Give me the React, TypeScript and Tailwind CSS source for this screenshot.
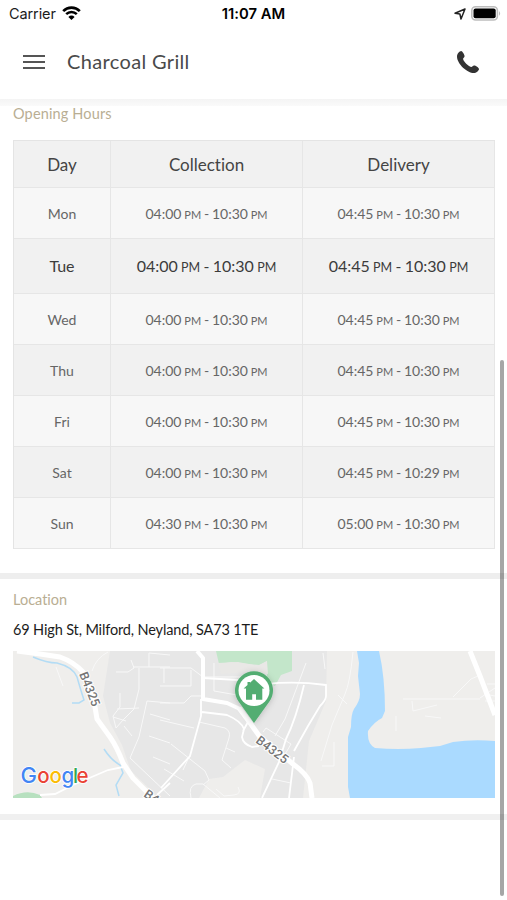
import React from 'react';
import clsx from 'clsx';

interface OpeningTime {
  day: string;
  collection: [string, string];
  delivery: [string, string];
}

const OPENING_HOURS: OpeningTime[] = [
  { day: 'Mon', collection: ['04:00', '10:30'], delivery: ['04:45', '10:30'] },
  { day: 'Tue', collection: ['04:00', '10:30'], delivery: ['04:45', '10:30'] },
  { day: 'Wed', collection: ['04:00', '10:30'], delivery: ['04:45', '10:30'] },
  { day: 'Thu', collection: ['04:00', '10:30'], delivery: ['04:45', '10:30'] },
  { day: 'Fri', collection: ['04:00', '10:30'], delivery: ['04:45', '10:30'] },
  { day: 'Sat', collection: ['04:00', '10:30'], delivery: ['04:45', '10:29'] },
  { day: 'Sun', collection: ['04:30', '10:30'], delivery: ['05:00', '10:30'] },
];

const TODAY = 'Tue';

const StatusBar = () => (
  <div className="grid h-[27px] shrink-0 grid-cols-3 items-center pr-[6px] pl-[9px] font-['Inter',sans-serif] text-[14.5px] text-[#1c1c1c]">
    <div className="flex items-center gap-[6px]">
      <span className="tracking-[-0.1px]">Carrier</span>
      <svg width="19" height="14" viewBox="0 0 19 14" fill="none" stroke="#000" className="-mt-[2px]">
        <path d="M1.2 5.1 a11.8 11.8 0 0 1 16.6 0" strokeWidth="2.7" />
        <path d="M4.2 8.2 a7.5 7.5 0 0 1 10.6 0" strokeWidth="2.5" />
        <path d="M9.5 14 L6.4 10.9 a4.4 4.4 0 0 1 6.2 0 Z" fill="#000" stroke="none" />
      </svg>
    </div>
    <span className="pt-[2px] pr-[3px] text-center text-[14.8px] font-semibold whitespace-nowrap text-black">11:07 AM</span>
    <div className="flex items-center justify-end gap-[5px]">
      <svg width="12" height="12" viewBox="0 0 12 12" fill="none" stroke="#222" strokeWidth="1.5" strokeLinejoin="round">
        <path d="M11 1 L1 5.3 L5.9 6 L7 11 Z" />
      </svg>
      <svg width="30" height="15" viewBox="0 0 30 15">
        <rect x="0.8" y="0.8" width="25.6" height="13.2" rx="3.8" fill="#fff" stroke="#bdbdbd" strokeWidth="1.6" />
        <rect x="2.5" y="2.5" width="22.2" height="9.8" rx="2" fill="#000" />
        <path d="M28 5 q2.2 2.4 0 4.8 Z" fill="#bdbdbd" />
      </svg>
    </div>
  </div>
);

const Header = () => (
  <header className="flex h-[72px] shrink-0 items-center pr-[28px] pb-[2px] pl-[23px]">
    <button className="flex w-[22px] flex-col gap-[4px]">
      <span className="h-[2px] w-full bg-[#555]" />
      <span className="h-[2px] w-full bg-[#555]" />
      <span className="h-[2px] w-full bg-[#555]" />
    </button>
    <h1 className="-mt-[3px] ml-[22px] flex-1 text-[20px] tracking-[0.35px] text-[#4a4a4a]">Charcoal Grill</h1>
    <button>
      <svg width="22" height="22" viewBox="0 0 22 22" fill="#333">
        <path d="M4.2 0 C5.2 0 7.6 3.6 7.6 5 C7.6 6.4 5.9 7 6.1 8.1 C6.7 11 11.1 15.2 14.1 15.9 C15.2 16.1 15.8 14.4 17.1 14.4 C18.6 14.4 22 16.6 22 17.9 C22 19.6 19.2 22 16.8 22 C10.5 22 0 13 0 5.4 C0 2.8 2.5 0 4.2 0 Z" />
      </svg>
    </button>
  </header>
);

const TimeRange = ({ range, active }: { range: [string, string]; active: boolean }) => {
  const small = active ? 'text-[12.5px]' : 'text-[11px]';
  return (
    <span className={active ? '[word-spacing:-0.8px]' : '[word-spacing:-0.8px]'}>
      {range[0]} <span className={small}>PM</span> - {range[1]} <span className={small}>PM</span>
    </span>
  );
};

const HoursTable = () => (
  <table className="mx-[13px] w-[482px] table-fixed border-separate border-spacing-0 border-t border-l border-[#e4e4e4] text-center">
    <colgroup>
      <col className="w-[97px]" />
      <col className="w-[192px]" />
      <col />
    </colgroup>
    <thead>
      <tr className="h-[47px] bg-[#f1f1f1] text-[17px] text-[#444]">
        {['Day', 'Collection', 'Delivery'].map((label) => (
          <th key={label} className="border-r border-b border-[#e6e6e6] p-0 pt-[2px] font-normal">
            {label}
          </th>
        ))}
      </tr>
    </thead>
    <tbody>
      {OPENING_HOURS.map((row, i) => {
        const active = row.day === TODAY;
        return (
          <tr
            key={row.day}
            className={clsx(
              i % 2 ? 'bg-[#f1f1f1]' : 'bg-[#f7f7f7]',
              active ? 'h-[55px] text-[16px] text-[#3c3c3c]' : 'h-[51px] text-[14px] text-[#666]',
            )}
          >
            <td className="border-r border-b border-[#e6e6e6] p-0">{row.day}</td>
            <td className="border-r border-b border-[#e6e6e6] p-0">
              <TimeRange range={row.collection} active={active} />
            </td>
            <td className="border-r border-b border-[#e6e6e6] p-0">
              <TimeRange range={row.delivery} active={active} />
            </td>
          </tr>
        );
      })}
    </tbody>
  </table>
);

const LocationMap = () => (
  <svg className="mx-[13px] block" width="482" height="147" viewBox="0 0 482 147" fill="none">
    <defs>
      <filter id="pinShadow" x="-50%" y="-50%" width="200%" height="200%">
        <feDropShadow dx="0" dy="1" stdDeviation="3" floodColor="#000" floodOpacity="0.2" />
      </filter>
    </defs>
    <rect width="482" height="147" fill="#efeeec" />

    {/* Built up area */}
    <path d="M97 0 H314 L313 50 L296 90 L290 147 H247 L252 118 L232 109 L210 126 L196 128 L186 147 H146 L118 120 L109 94 L97 72 L90 45 Z" fill="#e7e7e7" />
    <path d="M203 0 H279 V20 L268 24 L262 35 L254 31 V10 L246 14 L218 11 L206 13 Z" fill="#c3e6ca" />
    <path d="M205 12 L225 11 L245 15 L254 10 L255 23 L235 21 L208 23 Z" fill="#e9e8e6" />
    <path d="M0 145 Q14 138 27 144 L29 147 H0 Z" fill="#b7e0bf" />

    {/* Water */}
    <path d="M344 0 L346 12 L345 25 L347 43 Q347 50 341 58 Q338 63 338 76 L335 86 V136 L337 147 H482 V90 Q460 88 440 91 L427 95 L408 97 Q385 99 362 97 Q354 93 355 80 Q361 71 369 67 L372 60 Q372 26 366 0 Z" fill="#aadaff" />
    <g stroke="#b3dcf5" strokeWidth="1.5">
      <path d="M20 6 Q34 12 44 12 Q60 16 64 26 Q68 40 71 49 L66 52 L59 52" />
      <path d="M91 98 Q98 109 107 114 L110 122 L103 134 L106 145" />
    </g>

    {/* Minor roads */}
    <g stroke="#f8f8f8" strokeWidth="1">
      <path d="M43 16 L50 35 M79 20 Q83 7 95 1 M103 21 H115 L121 17 L118 9 M120 16 H157 M136 16 V2 L157 4" />
      <path d="M126 17 V38 L121 58 L110 69 L103 77 L100 65 L107 56 V42 M104 58 L126 57 M100 66 L113 70 M111 75 L119 85" />
      <path d="M157 52 L134 50 L126 86 L117 107 M137 63 L157 69 M136 85 L157 92 M140 106 L157 113 M117 107 L157 145" />
      <path d="M147 17 H178 L190 26 H230 M147 35 H178 V19 M201 12 V40 L224 44 M147 52 H171 L178 45 H190 M151 17 V32" />
      <path d="M147 69 L181 77 M186 71 L212 77 Q218 80 216 87 L209 109 L218 117 M213 97 L222 101" />
      <path d="M158 93 L192 120 L196 129 L190 134 M176 106 L170 119 M151 118 L171 130 M178 147 Q175 135 183 133 H190 L207 147 M203 138 L211 145 L221 144 Q229 143 225 136" />
      <path d="M293 12 L272 68 L262 85 M250 81 L253 77 L278 93 L267 112 M259 128 L278 132" />
      <path d="M310 2 L312 18 M340 1 Q337 32 332 43 L319 74 L308 110 M321 91 V115 H309 M325 44 L334 53" />
      <path d="M390 48 H440 L467 48 M440 46 L458 28 L465 25 M399 50 L400 60 L424 54 M412 65 L428 67 M383 65 V80 M471 43 L482 45 M472 50 H482 M474 33 H482 M467 47 L482 37" />
    </g>
    <g stroke="#fff" strokeWidth="1.8">
      <path d="M190 27 L225 29 L254 33 Q282 30 313 34 V45 Q313 49 307 55 L295 75 L281 100" />
      <path d="M291 34 Q283 68 273 88 L266 111 L249 147 M281 106 L276 147" />
      <path d="M188 48 V65 L177 105 L148 137 M189 61 L214 64 Q228 70 231 78 L229 86 Q230 93 239 96 L246 95 M235 71 L230 80" />
      <path d="M27 144 L42 143 L60 134 L95 119 L110 116 M144 144 L157 132" />
    </g>

    {/* Main roads */}
    <g stroke="#fff" strokeLinejoin="round">
      <path d="M4 0 L27 3 L47 6 Q61 11 70 21 Q79 36 81 50 L84 68 L97 86 Q104 96 110 112 L120 127 L137 144 L144 150" strokeWidth="5" />
      <path d="M184 0 L190 7 V48 L214 52 L227 58" strokeWidth="4" />
      <path d="M226 57 L235 69 L247 86 L280 113 Q294 123 297 132 L299 147" strokeWidth="5" />
      <path d="M457 0 L467 25 L482 64" strokeWidth="5" />
    </g>

    <g
      className="font-['Roboto',sans-serif] text-[12.5px] font-medium"
      fill="#757575"
      stroke="#fff"
      strokeWidth="2"
      paintOrder="stroke"
    >
      <text transform="translate(66 23) rotate(68)" textLength="36">B4325</text>
      <text transform="translate(242 91) rotate(37)" textLength="37">B4325</text>
      <text transform="translate(130 145) rotate(35)">B4</text>
    </g>

    {/* Pin */}
    <path d="M241 72 L225.6 50.4 A19 19 0 1 1 256.4 50.4 Z" fill="#53ad72" filter="url(#pinShadow)" />
    <circle cx="241" cy="39.5" r="15.5" fill="#fff" />
    <path d="M241 28 L251.4 37.6 H249.3 V48.7 H243 V43.3 H239.2 V48.7 H233 V37.6 H230.6 L234.5 34 V31 H237 V31.7 Z" fill="#53ad72" />

    <text
      y="132"
      className="font-['Inter',sans-serif] text-[20.5px] font-medium"
      stroke="#fff"
      strokeWidth="1.6"
      paintOrder="stroke"
    >
      <tspan x="7.6" fill="#4285f4" className="text-[22px]">G</tspan>
      <tspan x="24.3" fill="#ea4335">o</tspan>
      <tspan x="36.6" fill="#fbbc05">o</tspan>
      <tspan x="48.6" fill="#4285f4">g</tspan>
      <tspan x="60" fill="#34a853">l</tspan>
      <tspan x="63.4" fill="#ea4335">e</tspan>
    </text>
  </svg>
);

export default function App() {
  return (
    <div className="relative flex h-[900px] w-[507px] flex-col overflow-hidden bg-white font-['Lato',sans-serif] [font-variant-ligatures:none]">
      <StatusBar />
      <Header />

      <main>
        <div className="h-[7px] bg-linear-to-b from-[#f4f4f4] to-[#fafafa]" />
        <h2 className="mb-[19px] px-[13px] text-[14.5px] leading-[15px] tracking-[0.15px] text-[#b9ae93]">Opening Hours</h2>
        <HoursTable />

        <div className="mt-[24px] h-[6px] bg-[#eeeeee]" />
        <section className="flex flex-col">
          <h2 className="mt-[12px] px-[13px] text-[14.5px] leading-[18px] text-[#b9ae93]">Location</h2>
          <p className="mt-[12px] mb-[12px] px-[13px] text-[14.5px] leading-[18px] tracking-[-0.14px] text-[#1c1c1c]">
            69 High St, Milford, Neyland, SA73 1TE
          </p>
          <LocationMap />
        </section>
        <div className="mt-[16px] h-[6px] bg-[#f0f0f0]" />
      </main>

      {/* Scroll indicator */}
      <div className="absolute top-[360px] right-[3px] h-[536px] w-[4px] rounded-full bg-black/35" />
    </div>
  );
}
